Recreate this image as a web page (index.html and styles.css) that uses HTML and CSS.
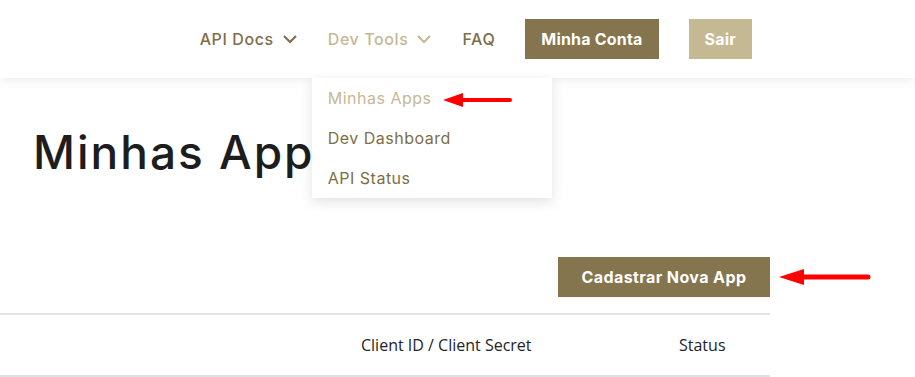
FILE: index.html
```html
<!DOCTYPE html>
<html lang="pt-BR">
<head>
  <meta charset="UTF-8" />
  <meta name="viewport" content="width=device-width, initial-scale=1.0"/>
  <title>Minhas Apps</title>
  <link rel="stylesheet" href="styles.css">
</head>
<body>

  <!-- Topo com menu -->
  <header class="topbar">
    <nav class="menu">
      <div class="menu-item">
        <a href="#" class="menu-link">API Docs</a>
        <svg class="chevron" viewBox="0 0 16 10" width="16" height="10"><path d="M2 2l6 6 6-6" fill="none" stroke="currentColor" stroke-width="2"/></svg>
      </div>
      <div class="menu-item menu-item--open">
        <a href="#" class="menu-link">Dev Tools</a>
        <svg class="chevron" viewBox="0 0 16 10" width="16" height="10"><path d="M2 2l6 6 6-6" fill="none" stroke="currentColor" stroke-width="2"/></svg>

        <div class="dropdown">
          <ul>
            <li><a href="#" class="dropdown-link active">Minhas Apps</a></li>
            <li><a href="#" class="dropdown-link">Dev Dashboard</a></li>
            <li><a href="#" class="dropdown-link">API Status</a></li>
          </ul>
          <svg class="arrow arrow--menu" viewBox="0 0 70 18" width="70" height="18"><path d="M0 9L20 2v5h47a2 2 0 0 1 0 4H20v5z" fill="#f00"/></svg>
        </div>
      </div>
      <div class="menu-item">
        <a href="#" class="menu-link">FAQ</a>
      </div>
      <a href="#" class="btn btn-dark">Minha Conta</a>
      <a href="#" class="btn btn-light">Sair</a>
    </nav>
  </header>

  <main class="content">
    <h1>Minhas Apps</h1>

    <div class="actions">
      <a href="#" class="btn btn-dark btn-big">Cadastrar Nova App</a>
      <svg class="arrow arrow--button" viewBox="0 0 92 20" width="92" height="20"><path d="M0 10L25 2v5.5h64a2.5 2.5 0 0 1 0 5H25V18z" fill="#f00"/></svg>
    </div>

    <table class="apps-table">
      <thead>
        <tr>
          <th class="col-name"></th>
          <th class="col-client">Client ID / Client Secret</th>
          <th class="col-status">Status</th>
        </tr>
      </thead>
    </table>
  </main>

</body>
</html>
```

FILE: styles.css
```css
* {
  margin: 0;
  padding: 0;
  box-sizing: border-box;
}

body {
  font-family: Inter, "Noto Sans", sans-serif;
  background-color: #fff;
  color: #1d1d1d;
  overflow: hidden;
}

a {
  text-decoration: none;
}

.topbar {
  height: 78px;
  background-color: #fff;
  box-shadow: 0 2px 10px rgba(0, 0, 0, 0.08);
  position: relative;
  z-index: 3;
}

.menu {
  display: flex;
  justify-content: flex-end;
  align-items: center;
  gap: 30px;
  height: 100%;
  padding-right: 163px;
}

.menu-item {
  display: flex;
  align-items: center;
  gap: 8px;
  color: #7d6e48;
  position: relative;
}

.menu-link {
  color: inherit;
  font-size: 16px;
  font-weight: 500;
  letter-spacing: 0.6px;
}

.menu-item--open {
  color: #c4b995;
}

.chevron {
  display: block;
}

.btn {
  display: inline-flex;
  align-items: center;
  justify-content: center;
  height: 40px;
  padding: 0 16px;
  color: #fff;
  font-size: 16px;
  font-weight: 700;
  letter-spacing: 0.2px;
}

.btn-dark {
  background-color: #84754e;
}

.btn-light {
  background-color: #c5b994;
}

.dropdown {
  position: absolute;
  top: 49px;
  left: -16px;
  width: 240px;
  background-color: #fff;
  box-shadow: 0 4px 12px rgba(0, 0, 0, 0.12);
}

.dropdown ul {
  list-style: none;
}

.dropdown-link {
  display: block;
  padding: 0 16px;
  line-height: 40px;
  font-size: 16px;
  letter-spacing: 0.5px;
  color: #7d6e48;
}

.dropdown-link.active {
  color: #c4b995;
}

.arrow {
  position: absolute;
  display: block;
}

.arrow--menu {
  top: 13px;
  left: 131px;
}

.content {
  width: 770px;
}

h1 {
  font-size: 46px;
  font-weight: 500;
  letter-spacing: 2px;
  padding-left: 33px;
  margin-top: 46px;
  line-height: 56px;
}

.actions {
  display: flex;
  justify-content: flex-end;
  margin-top: 77px;
  position: relative;
}

.btn-big {
  width: 212px;
  letter-spacing: 0.4px;
}

.arrow--button {
  top: 10px;
  left: 779px;
}

.apps-table {
  width: 100%;
  margin-top: 16px;
  border-collapse: collapse;
  font-family: "Open Sans", sans-serif;
}

.apps-table th {
  font-size: 16px;
  font-weight: 400;
  color: #212529;
  text-align: left;
  height: 62px;
  border-top: 2px solid #e3e3e3;
  border-bottom: 3px solid #dee2e6;
}

.col-name {
  width: 361px;
}

.col-client {
  width: 318px;
}
```
